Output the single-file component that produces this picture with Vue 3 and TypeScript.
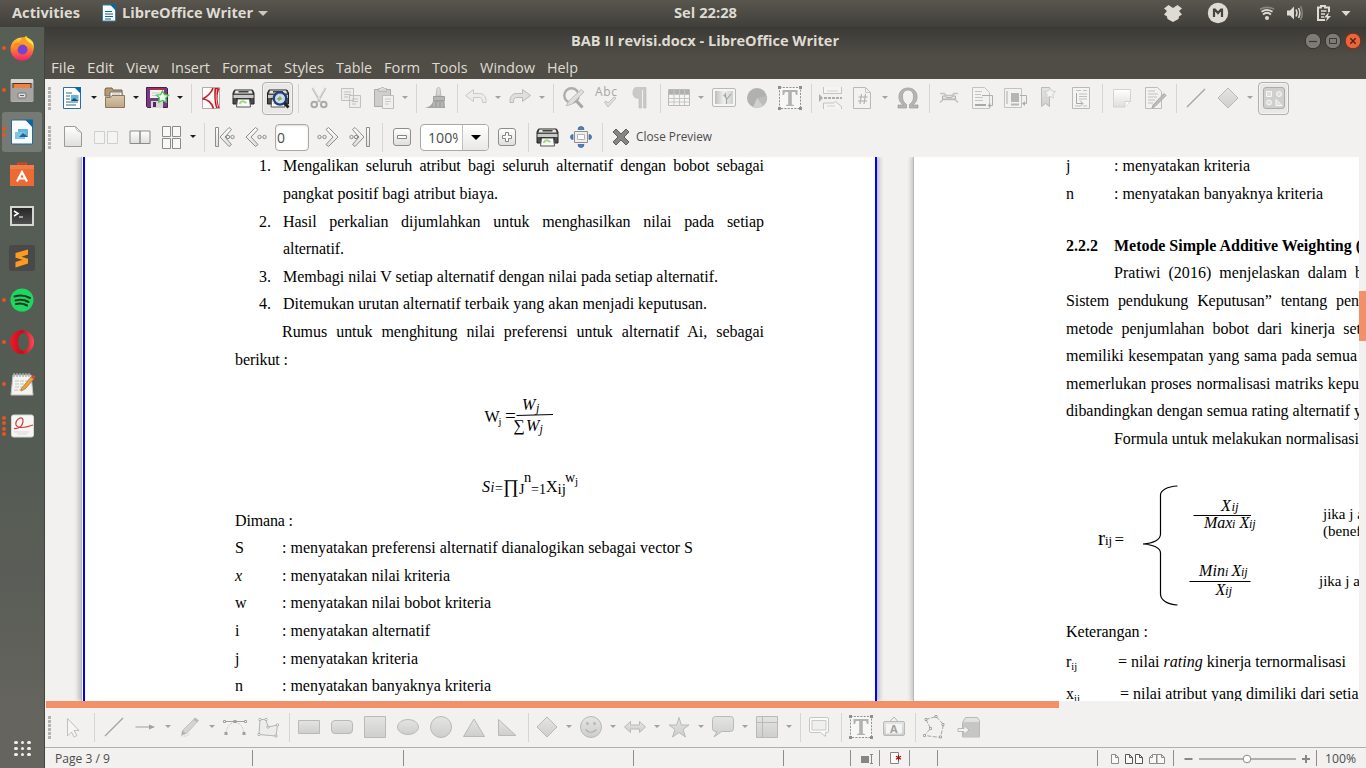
<script setup lang="ts">
import { h, type FunctionalComponent } from 'vue'

interface LabelProps { t: string; w?: number; s?: number; b?: boolean; ws?: number; serif?: boolean; c?: string }

/* A single line of text fitted to a known advance width. */
const Label: FunctionalComponent<LabelProps> = (p) =>
  h('svg', { class: 'label', width: p.w ?? 10, height: 24 }, [
    h('text', {
      x: 0,
      y: 17,
      'font-size': p.s ?? 14,
      'font-weight': p.b ? 700 : 400,
      'font-family': p.serif ? "'Liberation Serif', serif" : "'Open Sans', 'Noto Sans', sans-serif",
      fill: p.c ?? '#000',
      'word-spacing': p.ws ?? 0,
      textLength: p.w,
      lengthAdjust: p.serif ? 'spacing' : 'spacingAndGlyphs',
      innerHTML: p.t,
    }),
  ])
Label.props = { t: String, w: Number, s: Number, b: Boolean, ws: Number, serif: Boolean, c: String }

const G = 'stroke="#b9b9b7" fill="url(#gr)"'
const D = 'stroke="#8d8d8b" fill="url(#lt)"'
const printer = `<path d="M3 4h18l1.500 3v11H1.500V7z" fill="#4b4d4a" stroke="#222"/><path d="M4 4.500h16l1 3H3z" fill="#e6e6e4"/><path d="M7 5.800h10" stroke="#333" stroke-width="1.400"/><path d="M2 9h20v3H2z" fill="#c9cac8"/><path d="M5 12h14v3H5z" fill="#1d1d1d"/><path d="M6 13h12l1 8H5z" fill="#fafafa" stroke="#555"/><path d="M8 18c2-4 4-3 7-1" stroke="#a5d683" stroke-width="2" fill="none"/>`
const textBox = `<path d="M1.500 1.500h21v21h-21z" fill="#f7f7f6" stroke="#8f8f8d" stroke-dasharray="2 1.300"/><path d="M0 0h3v3H0zM21 0h3v3h-3zM0 21h3v3H0zM21 21h3v3h-3z" fill="#8f8f8d"/><path d="M4.500 4h15v5h-1.500l-1-3h-3.200v12.500l2.200.500v1H8v-1l2.200-.500V6H7L6 9H4.500z" fill="#b2b2b0"/>`

const icons: Record<string, string> = {
  newDoc: `<path d="M3.500 1.500h12l5 5v16h-17z" fill="#fff" stroke="#2b6f97"/><path d="M14 1h7v7z" fill="#0b6aa5"/><path d="M6 7h6M6 10h4M6 13h4M6 16h12M6 19h10" stroke="#236b94"/><path d="M11 9h7.500v6H11z" fill="#69b2d8"/><path d="M11 15l3-3 4.500 3z" fill="#154e75"/>`,
  open: `<path d="M2 5.500V3l1-1h6l1 2h9v6H2z" fill="#b39a79" stroke="#7d6548"/><path d="M7 6h12v8H7z" fill="#fafafa" stroke="#777"/><path d="M9 8h8M9 10h8" stroke="#bbb"/><path d="M2.500 21.500V11.500h5l1.500-2h12.500v12z" fill="url(#tan)" stroke="#8d7657"/>`,
  save: `<path d="M1.500 1.500h20l1 1v19h-20l-1-1z" fill="#783b80" stroke="#45204c"/><path d="M5 2h14v10H5z" fill="#f2f2f2"/><path d="M5 2h14v2H5z" fill="#b52d42"/><path d="M7 7h8M7 9.500h6" stroke="#c9c9c9"/><path d="M6 15h12v7H6z" fill="#d6d6d6"/><path d="M8 16h3v5H8z" fill="#522959"/><path d="M17.500 5l2 3.600 4 .600-2.800 2.900.7 4.100-3.900-1.700-3.700 1.700.6-4.100-2.900-2.900 4.100-.6z" fill="#effff0" stroke="#4dc65e" stroke-width="1.300"/>`,
  pdf: `<path d="M3.500 1.500h17v21h-17z" fill="#fbfafa" stroke="#b8a8a6"/><path d="M14 2C13 6 8 11 3.500 13c4.500 0 9.500 3.500 11 9.500" fill="none" stroke="#c4262b" stroke-width="1.700"/><path d="M15.500 2c1.500 0 4 0 5 .500C18 8 18 15 20.500 22H17c-2-6-2-14-1.500-20z" fill="#c4161c"/><path d="M17.700 3c-.9 6-.9 12 1 18.500" stroke="#fff" stroke-width=".7" fill="none"/>`,
  print: `<g transform="translate(.5 0)">${printer}</g>`,
  preview: `<g>${printer}</g><circle cx="14" cy="12.500" r="6.200" fill="#cbe0ef" fill-opacity=".9" stroke="#243b80" stroke-width="2.200"/><path d="M11 13l3-3 2 3-3 2z" fill="#8cae50"/><path d="M18.500 17l4 4.500" stroke="#222" stroke-width="2.800"/>`,
  cut: `<path d="M5.500 2l8 14M18.500 2l-8 14" stroke="#c2c2c0" stroke-width="2.200"/><path d="M6 2l8 13M18 2l-8 13" stroke="#e8e8e6" stroke-width=".8"/><circle cx="7.200" cy="18.500" r="2.800" fill="none" stroke="#aaaaa8" stroke-width="2"/><circle cx="16.800" cy="18.500" r="2.800" fill="none" stroke="#aaaaa8" stroke-width="2"/>`,
  copy: `<g fill="#ededeb" stroke="#c1c1bf"><path d="M2.500 2.500h12v12h-12zM10.500 9.500h11v12h-11z"/><path d="M5 6h7M5 8.500h7M5 11h4M13 13h6M13 15.500h6M13 18h4"/></g>`,
  paste: `<path d="M2.500 3.500h16v17h-16z" fill="#cececc" stroke="#a9a9a7"/><path d="M6.500 5.500v-3h2l1-1h2l1 1h2v3z" ${G}/><path d="M10.500 9.500h11v13h-11z" fill="#f0f0ee" stroke="#bdbdbb"/><path d="M13 13h6M13 15.500h6M13 18h4" stroke="#c8c8c6"/>`,
  brush: `<path d="M12 10l1-7c0-2 3-2 3 0l1 7z" ${G}/><path d="M9.500 10.500h11v4h-11z" fill="#b7b7b5" stroke="#9d9d9b"/><path d="M9 15h11.500l.5 7H1c4-1 7-3 8-7z" fill="#a5a5a3"/><path d="M10 16v5M14 16v5M18 16v5" stroke="#c3c3c1"/>`,
  undo: `<path d="M9.500 3.500v4h6c4 0 6.500 3 6.500 7v2h-3.500c0-4-1-5-3.500-5H9.500v4L1.500 9.500z" fill="#ececea" stroke="#c8c8c6"/>`,
  redo: `<path d="M14.500 3.500v4h-6c-4 0-6.500 3-6.500 7v2h3.500c0-4 1-5 3.500-5h5.500v4l8-6z" fill="#dfdfdd" stroke="#b9b9b7"/>`,
  find: `<circle cx="10.500" cy="9.500" r="7.200" fill="none" stroke="#adadab" stroke-width="2.400"/><path d="M15.500 15l6 6.500" stroke="#a8a8a6" stroke-width="3.200"/><path d="M5 20l3-5L20 3.500 23 6 11 18z" fill="#dededc" stroke="#bebebc"/>`,
  spell: `<text x="0" y="10" font-size="12" font-family="Open Sans, Noto Sans, sans-serif" fill="#a5a5a3" textLength="22">Abc</text><path d="M9.500 16l3.500 5 8-9-2-1-6 6-2-2z" fill="#e0e0de" stroke="#c0c0be"/>`,
  pilcrow: `<path d="M9 1.500h10v20.500h-2.500V3.500h-2V22H12V12C7.500 13 5.500 9.500 6 6c.3-3 1.500-4.500 3-4.500z" fill="#c9c9c7" stroke="#bbbbb9" stroke-width=".6"/>`,
  table: `<path d="M1.500 3.500h21v16h-21z" fill="#f5f5f4" stroke="#b9b9b7"/><path d="M2 4h20v4H2z" fill="#b0b0ae"/><path d="M2 8.500h20M2 12.500h20M2 16h20M7 4v15M12.500 4v15M17.500 4v15" stroke="#c5c5c3"/>`,
  image: `<rect x=".5" y="2.500" width="23" height="18" rx="1.500" fill="#f5f5f4" stroke="#b9b9b7"/><path d="M3 5h18v13H3z" fill="url(#pic)"/><path d="M14.500 18c0-4 1-6-3-9M15 13l4-5M14 11l-1-4" stroke="#a5a5a3" fill="none" stroke-width="1.200"/>`,
  chart: `<circle cx="12" cy="12" r="10" fill="#b1b1af"/><path d="M12 12l10-2a10 10 0 0 1-4 9.500z" fill="#bcbcba"/><path d="M12 12l-4 9.500q5 2 10-2z" fill="#d0d0ce"/>`,
  textBox,
  pageBreak: `<path d="M4.500 1v6.500h18V1M4.500 23v-6h10l2-1.500 6 5V23" fill="#f4f4f3" stroke="#c2c2c0"/><path d="M0 8v8l4-4z" fill="#adadab"/><path d="M5 12h18" stroke="#adadab" stroke-width="1.800" stroke-dasharray="3 1"/><path d="M8 5h11M8 20h8" stroke="#d0d0ce"/>`,
  field: `<path d="M3.500 1.500h12l5 5v16h-17z" fill="#f2f2f0" stroke="#b9b9b7"/><path d="M15.500 1.500v5h5" fill="none" stroke="#c5c5c3"/><path d="M11.500 8l-1.500 10M15.500 8l-1.500 10M8.500 11h9M8 15h9" stroke="#adadab" stroke-width="1.100"/>`,
  omega: `<path d="M2 22v-3h5.500C4 17 2.500 13.500 3 9.500 3.500 5 7 2 12 2s8.500 3 9 7.500c.4 4-1 7.500-4.500 9.500H22v3h-8.500v-3.500c3-2 4.300-5 4-9C17.200 6 15.200 4 12 4S6.800 6 6.500 9.500c-.3 4 1 7 4 9V22z" fill="#b5b5b3" stroke="#999997" stroke-width=".7"/>`,
  link: `<path d="M3 7.500h4l2 2h6l2-2h4M3 16.500l3-3h12l3 3" fill="none" stroke="#c2c2c0" stroke-width="1.600"/><path d="M5.500 10h3l1 1.500h5l1-1.500h3v3h-13z" fill="#e5e5e3" stroke="#b0b0ae"/>`,
  footnote: `<path d="M2.500 1.500h12l5 5v16h-17z" fill="#f2f2f0" stroke="#c2c2c0"/><path d="M5 5.500h7M5 8.500h6M5 11.500h8M5 14.500h8" stroke="#c5c5c3"/><path d="M5 19h11" stroke="#a1a19f" stroke-width="1.800"/><path d="M12 9.500h10.500v10H20" fill="none" stroke="#adadab"/><path d="M20.500 17v5l-3-2.500z" fill="#adadab"/>`,
  endnote: `<path d="M1.500 2.500h17v19h-17z" fill="#f2f2f0" stroke="#c2c2c0"/><path d="M8 7h8v9H8zM8 17.500h8v2H8z" fill="#b5b5b3"/><path d="M17 9.500h6.500v8H21M4 5v13" fill="none" stroke="#adadab"/><path d="M22 15v5l-3-2.500z" fill="#adadab"/>`,
  bookmark: `<path d="M4.500 1.500h8v19l-4-3-4 3z" ${G}/><path d="M13 2l1.700 3 3.800.600-2.700 2.700.6 3.700-3.400-1.600-3.400 1.600.5-3.700L7.500 5.600l3.700-.600z" fill="#f3f3f2" stroke="#cfcfcd"/>`,
  crossref: `<path d="M3.500 1.500h17v21h-17z" fill="#f4f4f2" stroke="#b9b9b7"/><path d="M7 4.500h5M14 4.500h4M10 8h8M10 10.500h8M10 13h8M6 20h5M14 20h4" stroke="#c0c0be"/><path d="M7.500 7v10.500h6M11 14.500l3 3-3 3" fill="none" stroke="#a8a8a6"/>`,
  comment: `<path d="M3.500 3.500h17v12l-5.500 5.500H3.500z" fill="url(#lt)" stroke="#d2d2d0"/><path d="M20 15.500h-5V21" fill="#fff" stroke="#d2d2d0"/>`,
  track: `<path d="M2.500 1.500h12l4 4v17h-16z" fill="#f2f2f0" stroke="#bcbcba"/><path d="M5 5h7M5 8h10M5 11h9M5 14h7M5 17h5" stroke="#c0c0be"/><path d="M10 19L21 7.500l2 2L12 20.500 9 22z" fill="#bcbcba" stroke="#a9a9a7"/>`,
  line: `<path d="M3 21L21 3" stroke="#a3a3a1" stroke-width="1.200"/>`,
  diamond: `<path d="M12 2L22 12 12 22 2 12z" ${G}/>`,
  shapes: `<rect x="1.500" y="1.500" width="21" height="21" rx="2.500" fill="#cfcfcd" stroke="#acacaa"/><g fill="#dededc" stroke="#f7f7f6"><path d="M4.500 5.500h5v5h-5zM14 19.500v-6l6 6z"/><circle cx="17" cy="8" r="2.500"/><circle cx="7" cy="16.500" r="2.500"/></g>`,
  page: `<path d="M3.500 1.500h11l6 6v14h-17z" fill="url(#lt)" stroke="#9a9a98"/><path d="M14 1.500q1 5 6 6" fill="#fff" stroke="#b9b9b7"/>`,
  pages2f: `<path d="M.5 6.500h10v12H.5zM13.500 6.500h10v12h-10z" fill="#f4f4f2" stroke="#cfcfcd"/>`,
  pages2: `<path d="M2 6h10v12.500H2zM12 6h10v12.500H12z" fill="url(#lt)" stroke="#8b8b89"/>`,
  pages4: `<path d="M3.500 1.500h8v10h-8zM13.500 1.500h8v10h-8zM3.500 13.500h8v10h-8zM13.500 13.500h8v10h-8z" fill="#f8f8f7" stroke="#8b8b89"/>`,
  first: `<path d="M3.500 2.500h3v19h-3z" ${D}/><path d="M8 12l9-9.500 2.500 2L13 12l6.500 7.500-2.500 2z" ${D}/><g ${D}><circle cx="16" cy="12" r="1.700"/><circle cx="20.500" cy="12" r="1.700"/></g>`,
  prev: `<path d="M2 12l9.500-9.500 2.500 2L7 12l7 7.500-2.500 2z" ${D}/><g ${D}><circle cx="15.500" cy="12" r="1.700"/><circle cx="20.500" cy="12" r="1.700"/></g>`,
  next: `<path d="M22 12l-9.500-9.500-2.500 2L17 12l-7 7.500 2.500 2z" ${D}/><g ${D}><circle cx="3.500" cy="12" r="1.700"/><circle cx="8.500" cy="12" r="1.700"/></g>`,
  last: `<path d="M18.500 2.500h3v19h-3z" ${D}/><path d="M16 12L7 2.500l-2.500 2L11 12l-6.500 7.500 2.500 2z" ${D}/><g ${D}><circle cx="3.500" cy="12" r="1.700"/><circle cx="8" cy="12" r="1.700"/></g>`,
  minus: `<rect x="3.500" y="3.500" width="17" height="17" rx="2.500" ${D}/><path d="M7.500 10.500h9v3h-9z" fill="#fff" stroke="#858583"/>`,
  plus: `<rect x="3.500" y="3.500" width="17" height="17" rx="2.500" ${D}/><path d="M10.500 7.500h3v3h3v3h-3v3h-3v-3h-3v-3h3z" fill="#fff" stroke="#858583"/>`,
  fit: `<path d="M5.500 6.500h13v11h-13z" fill="#eee" stroke="#8e8e8c"/><path d="M8.500 9.500h7v5h-7z" fill="#fff" stroke="#b5b5b3"/><g fill="#5680bb" stroke="#315b95" stroke-width=".7"><path d="M9 4.500Q9 1.500 12 1.500t3 3zM9 19.500q0 3 3 3t3-3zM4 9.500q-2.500 0-2.500 2.500T4 14.500zM20 9.500q2.500 0 2.500 2.500T20 14.500z"/></g>`,
  close: `<path d="M4 7l3-3 5 5 5-5 3 3-5 5 5 5-3 3-5-5-5 5-3-3 5-5z" fill="#858583" stroke="#5f5f5d"/>`,
  pointer: `<path d="M7.500 3.500l11.500 12h-5l3 5-3 1.500-2.500-5-4 4z" fill="#f5f5f4" stroke="#c0c0be"/>`,
  arrow: `<path d="M2.500 12h14" stroke="#a0a09e"/><path d="M16 9.500l6 2.500-6 2.500z" fill="#a0a09e"/>`,
  pencil: `<path d="M5 15L17 3l3.500 2.500L9 18l-5 2z" fill="#d3d3d1" stroke="#c2c2c0"/><path d="M17 3l3.500 2.500L19 7.500 15.500 5z" fill="#bababa"/><path d="M4 15.500l4 3-4.500 1.500z" fill="#b0b0ae"/><path d="M3 20.500q5 2 9-2" stroke="#d0d0ce" fill="none" stroke-dasharray="2 1"/>`,
  curve: `<path d="M2 6.500h20" stroke="#a0a09e"/><path d="M12 7Q4 9 3 18M12 7q8 2 9 11" fill="none" stroke="#c6c6c4" stroke-dasharray="2 1"/><path d="M10.500 5h3v3h-3zM1.500 17h3v3h-3zM19.500 17h3v3h-3z" fill="#a0a09e"/><path d="M.5 5.500h2v2h-2zM21.500 5.500h2v2h-2z" fill="#fff" stroke="#a0a09e"/>`,
  poly: `<path d="M4 4.500h6L12 12l9.500-2L20 21 3 19.500z" fill="#ececea" stroke="#b5b5b3"/><g fill="#fff" stroke="#a0a09e" stroke-width=".8"><circle cx="4" cy="4.500" r="1.200"/><circle cx="10" cy="4.500" r="1.200"/><circle cx="12" cy="12" r="1.200"/><circle cx="21.500" cy="10" r="1.200"/><circle cx="20" cy="21" r="1.200"/><circle cx="3" cy="19.500" r="1.200"/></g>`,
  rect: `<path d="M1.500 5.500h21v13h-21z" ${G}/>`,
  rrect: `<rect x="1.500" y="5.500" width="21" height="13" rx="3.500" ${G}/>`,
  square: `<path d="M1.500 1.500h21v21h-21z" ${G}/>`,
  ellipse: `<ellipse cx="12" cy="12" rx="10.500" ry="7.500" ${G}/>`,
  circle: `<circle cx="12" cy="12" r="10.500" ${G}/>`,
  tri: `<path d="M12 4l10.500 17.500h-21z" ${G}/>`,
  rtri: `<path d="M3.500 4.500V20.500h17.500z" ${G}/>`,
  smiley: `<circle cx="12" cy="12" r="10.500" ${G}/><path d="M6.500 14.500q5.500 6 11 0" fill="none" stroke="#b0b0ae" stroke-width="1.200"/><circle cx="8.500" cy="8.500" r="1.500" fill="#b8b8b6"/><circle cx="15.500" cy="8.500" r="1.500" fill="#b8b8b6"/>`,
  harrow: `<path d="M1.500 12l6-5.500v3.500h9V6.500l6 5.500-6 5.500V14h-9v3.500z" ${G}/>`,
  star: `<path d="M12 2.500l2.300 7.500H22l-6 4.500 2.500 7.500-6.500-4.500L5.500 22 8 14.500 2 10h7.700z" ${G}/>`,
  callout: `<path d="M4.500 1.500h15a3 3 0 0 1 3 3v9a3 3 0 0 1-3 3h-9L3 22l3-5.500H4.500a3 3 0 0 1-3-3v-9a3 3 0 0 1 3-3z" ${G}/>`,
  flow: `<path d="M1.500 1.500h21v21h-21zM1.500 7.500h21M7.500 1.500v21" ${G}/>`,
  note: `<path d="M4 2.500h16a1.500 1.500 0 0 1 1.500 1.500v12a1.500 1.500 0 0 1-1.500 1.500h-1.500v4l-5-4H4A1.500 1.500 0 0 1 2.500 16V4A1.500 1.500 0 0 1 4 2.500z" fill="#fafaf9" stroke="#c6c6c4"/><path d="M5 5.500h14v9.500H5z" fill="#efefed" stroke="#c9c9c7"/>`,
  frameA: `<path d="M8 6.500L12 2l4 4.500" fill="none" stroke="#b5b5b3"/><rect x="1.500" y="6.500" width="21" height="14" rx="1.500" ${G}/><path d="M4 9h16v9.500H4z" fill="#f4f4f3"/><text x="8" y="17.500" font-size="11" font-weight="700" font-family="Open Sans, Noto Sans, sans-serif" fill="#9f9f9d">A</text>`,
  points: `<path d="M4 4.500l10-3 7.500 8-3 13-16-2 6-7z" fill="none" stroke="#a6a6a4" stroke-dasharray="4 1.500"/><g fill="#fff" stroke="#929290" stroke-width=".8"><path d="M3 3.500h2v2H3zM13 .5h2v2h-2zM20 8.500h2v2h-2zM17.500 21h2v2h-2zM1.500 19.500h2v2h-2zM7.500 12.500h2v2h-2z"/></g>`,
  extrude: `<path d="M5.500 7.500l3-5h12l2 3v16.500h-17z" ${G}/><path d="M6 7h16v14.500H6z" fill="#c6c6c4"/><path d="M1 13.500h6v-3l5 4.500-5 4.500v-3H1z" fill="#f2f2f0" stroke="#b9b9b7"/>`,
}

const widths: Record<string, number> = { drop: 6, dropg: 6, sep: 1, handle: 3, entry: 34, combo: 69, pressed: 31 }

type Entry = [string, number]
/* Turns icon centres into the gaps between consecutive flex items. */
function flow(list: Entry[]) {
  let edge = 45
  return list.map(([name, centre]) => {
    const w = widths[name.split(':')[0]] ?? 24
    const gap = centre - w / 2 - edge
    edge = centre + w / 2
    const [kind, icon] = name.includes(':') ? name.split(':') : [name in widths ? name : 'icon', name]
    return { kind, icon, gap }
  })
}

const bars = [
  { id: 'standard', items: flow([['handle', 49.5], ['newDoc', 72], ['drop', 94], ['open', 115], ['drop', 136], ['save', 157], ['drop', 180], ['sep', 191.500], ['pdf', 211], ['print', 243], ['pressed:preview', 277.500], ['sep', 298.500], ['cut', 319], ['copy', 351], ['paste', 384], ['dropg', 405], ['sep', 416.500], ['brush', 436], ['sep', 457.500], ['undo', 476], ['dropg', 498], ['redo', 520], ['dropg', 542], ['sep', 553.500], ['find', 573], ['spell', 607], ['pilcrow', 639], ['sep', 660.500], ['table', 679], ['dropg', 701], ['image', 724], ['chart', 757], ['textBox', 790], ['sep', 811.500], ['pageBreak', 831], ['field', 862], ['dropg', 885], ['omega', 908], ['sep', 929.500], ['link', 949], ['footnote', 982], ['endnote', 1015], ['bookmark', 1049], ['crossref', 1081], ['sep', 1102.500], ['comment', 1122], ['track', 1155], ['sep', 1176.500], ['line', 1196], ['diamond', 1228], ['dropg', 1250], ['pressed:shapes', 1273.500]]) },
  { id: 'preview', items: flow([['handle', 49.5], ['page', 73], ['pages2f', 106], ['pages2', 139.500], ['pages4', 171], ['drop', 193], ['sep', 204.500], ['first', 224], ['prev', 256], ['entry', 292], ['next', 328], ['last', 360], ['sep', 382.500], ['minus', 402], ['combo', 454.500], ['plus', 507], ['sep', 528.500], ['print', 547], ['fit', 581], ['sep', 602.500], ['close', 621]]) },
]
const drawing = flow([['handle', 49.5], ['pointer', 72], ['sep', 94.500], ['line', 114], ['arrow', 145], ['dropg', 168], ['pencil', 190], ['dropg', 212], ['curve', 235], ['poly', 268], ['sep', 289.500], ['rect', 309], ['rrect', 342], ['square', 375], ['ellipse', 408], ['circle', 441], ['tri', 474], ['rtri', 507], ['sep', 528.500], ['diamond', 547], ['dropg', 569], ['smiley', 591], ['dropg', 613], ['harrow', 635], ['dropg', 657], ['star', 679], ['dropg', 701], ['callout', 723], ['dropg', 745], ['flow', 767], ['dropg', 789], ['sep', 800.500], ['note', 819], ['sep', 841.500], ['textBox', 861], ['frameA', 894], ['sep', 915.500], ['points', 934], ['extrude', 969]])

const menu: [string, number][] = [['File', 24], ['Edit', 27], ['View', 33], ['Insert', 39], ['Format', 50], ['Styles', 40], ['Table', 36], ['Form', 36], ['Tools', 35.500], ['Window', 55], ['Help', 31]]

const dock = [
  { dots: 1, svg: `<circle cx="13" cy="14" r="11.500" fill="url(#ff)"/><path d="M3 5l4 4 3-1 3-5 5-2 1 5q6 4 5 10-2-5-6-6-3-3-9 1z" fill="#ff9b22"/><path d="M16 1q1 5 5 7t3 8q2-9-2-11-1-1-1-1-3-1-5-3z" fill="#ffe34a"/><circle cx="13.500" cy="14.500" r="5" fill="#7542d3"/><path d="M5 9q4-3 8 1-4 0-4 4-4-1-4-5z" fill="#ff8a1c"/>` },
  { dots: 1, svg: `<rect x="1.500" y="2" width="23" height="23" rx="1.500" fill="#b1b0ac"/><path d="M2 2h22v4H2z" fill="#d6d5d2"/><path d="M3.500 6h19v5h-19z" fill="#4b3524"/><path d="M4.500 7h17v4h-17z" fill="#ef8240"/><path d="M2 11h22v13H2z" fill="#a6a5a1"/><rect x="9" y="16" width="8" height="5" rx="1" fill="#ddd" stroke="#74736f"/><path d="M11 18.500h4" stroke="#666"/>` },
  { dots: 2, active: true, svg: `<path d="M2.500 1h15l6 6v18h-21z" fill="#f9fbfc" stroke="#256c96"/><path d="M16 .5h8V9z" fill="#0968a4"/><path d="M9 10h10v8H9z" fill="#62b5dc"/><path d="M6 13h10v7H6z" fill="#83c5e2"/><path d="M10 18l4-4 5 4z" fill="#186796"/>` },
  { dots: 0, svg: `<path d="M9 6V2.500h8V6" fill="none" stroke="#d24a1e" stroke-width="2"/><path d="M1 4h24v21H1z" fill="#ec6b35"/><path d="M1 4h24v4H1z" fill="#f17c49"/><path d="M8 20.500l5-9.500 5 9.500M9.500 17.500h7" fill="none" stroke="#fff" stroke-width="2.200"/>` },
  { dots: 0, svg: `<path d="M1 3h24v20H1z" fill="#d5d5d1"/><path d="M3 5h20v16H3z" fill="url(#term)"/><path d="M5 8l4 2.500L5 13" fill="none" stroke="#fff" stroke-width="1.500"/><path d="M10 14h4" stroke="#ccc" stroke-width="1.400"/>` },
  { dots: 0, svg: `<rect width="26" height="26" rx="2" fill="#4a494a"/><path d="M19 4.500v5l-6.500 2.300 6.500 2v4.700L6.500 22.500V17l7-2.300-7-2V8z" fill="#ff9a1f"/>` },
  { dots: 1, svg: `<circle cx="13" cy="13" r="11.500" fill="#1ed760"/><path d="M5.500 9.500q8-2.500 15.500 1.500M6.500 13.500q7-2 13 1.500M7 17q6-1.500 11 1.500" fill="none" stroke="#173b22" stroke-width="2.100" stroke-linecap="round"/>` },
  { dots: 1, svg: `<path fill-rule="evenodd" d="M13 1a12 12 0 1 0 .1 0zM14 4q6 1 6 9t-6 9q-5-1-5-9t5-9z" fill="url(#op)"/>` },
  { dots: 1, svg: `<path d="M4 4h18l2 20H2z" fill="#f3f3f0" stroke="#c5c5c0"/><path d="M5 2v4M8 2v4M11 2v4M14 2v4M17 2v4M20 2v4" stroke="#aaa" stroke-width="1.300"/><path d="M6 10h13M6 13h12M6 16h8M5 19h7" stroke="#c3c3c0" stroke-dasharray="4 1"/><path d="M12 18L22 6l3 2-9 10-4 2z" fill="#f0a03c" stroke="#a96a23" stroke-width=".7"/><path d="M22 6l2-2 2.500 1.500L25 8z" fill="#d94742"/>` },
  { dots: 4, svg: `<rect x="2.500" y="2" width="22" height="22" rx="2" fill="#f6f6f5" stroke="#d5d5d2"/><path d="M5 15.500q8 .5 9-7 .5-4-3-3.500-5 2.500-4 7 3 5 17 0" fill="none" stroke="#d9373c" stroke-width="1.200"/><path d="M5 19h15M8 21h10" stroke="#d8d8d6"/>` },
]

interface Row { b: number; k?: string; kx?: number; t: string; x: number; w: number; ws?: number; bold?: boolean }
const leftTop: Row[] = [
  { b: 171, k: '1.', kx: 259, t: 'Mengalikan seluruh atribut bagi seluruh alternatif dengan bobot sebagai', x: 283, w: 481, ws: 3.4 },
  { b: 199, t: 'pangkat positif bagi atribut biaya.', x: 283, w: 215 },
  { b: 227, k: '2.', kx: 259, t: 'Hasil perkalian dijumlahkan untuk menghasilkan nilai pada setiap', x: 283, w: 481, ws: 8.8 },
  { b: 254, t: 'alternatif.', x: 283, w: 61 },
  { b: 282, k: '3.', kx: 259, t: 'Membagi nilai V setiap alternatif dengan nilai pada setiap alternatif.', x: 283, w: 435 },
  { b: 309, k: '4.', kx: 259, t: 'Ditemukan urutan alternatif terbaik yang akan menjadi keputusan.', x: 283, w: 424 },
  { b: 337, t: 'Rumus untuk menghitung nilai preferensi untuk alternatif Ai, sebagai', x: 282, w: 482, ws: 5 },
  { b: 365, t: 'berikut :', x: 235, w: 53 },
]
const leftBottom: Row[] = [
  { b: 526, t: 'Dimana :', x: 235, w: 58 },
  { b: 553, k: 'S', kx: 235, t: ': menyatakan preferensi alternatif dianalogikan sebagai vector S', x: 282, w: 411 },
  { b: 581, k: '<tspan font-style="italic">x</tspan>', kx: 235, t: ': menyatakan nilai kriteria', x: 282, w: 168 },
  { b: 608, k: 'w', kx: 235, t: ': menyatakan nilai bobot kriteria', x: 282, w: 209 },
  { b: 636, k: 'i', kx: 235, t: ': menyatakan alternatif', x: 282, w: 148 },
  { b: 664, k: 'j', kx: 235, t: ': menyatakan kriteria', x: 282, w: 136 },
  { b: 691, k: 'n', kx: 235, t: ': menyatakan banyaknya kriteria', x: 282, w: 209 },
]
const rightTop: Row[] = [
  { b: 171, k: 'j', kx: 1066, t: ': menyatakan kriteria', x: 1114, w: 136 },
  { b: 199, k: 'n', kx: 1066, t: ': menyatakan banyaknya kriteria', x: 1114, w: 209 },
  { b: 251, k: '2.2.2', kx: 1066, t: 'Metode Simple Additive Weighting (', x: 1114, w: 247, bold: true },
  { b: 278, t: 'Pratiwi (2016) menjelaskan dalam b', x: 1114, w: 249, ws: 4 },
  { b: 306, t: 'Sistem pendukung Keputusan” tentang pen', x: 1066, w: 293, ws: 5 },
  { b: 334, t: 'metode penjumlahan bobot dari kinerja set', x: 1066, w: 295, ws: 4.300 },
  { b: 361, t: 'memiliki kesempatan yang sama pada semua', x: 1066, w: 291, ws: 0.700 },
  { b: 389, t: 'memerlukan proses normalisasi matriks kepu', x: 1066, w: 293, ws: 0.500 },
  { b: 416, t: 'dibandingkan dengan semua rating alternatif y', x: 1066, w: 296 },
  { b: 444, t: 'Formula untuk melakukan normalisasi', x: 1114, w: 245 },
]
const rightBottom: Row[] = [
  { b: 637, t: 'Keterangan :', x: 1066, w: 82 },
  { b: 667, k: 'r<tspan font-size="10.500" dy="3">ij</tspan>', kx: 1066, t: '= nilai <tspan font-style="italic">rating</tspan> kinerja ternormalisasi', x: 1118, w: 228 },
  { b: 699, k: 'x<tspan font-size="10.500" dy="3">ij</tspan>', kx: 1066, t: '= nilai atribut yang dimiliki dari setia', x: 1119.500, w: 238.500 },
]
/* Row heights follow from the distance between neighbouring baselines. */
function rows(list: Row[], origin: number, end: number) {
  return list.map((r, i) => ({
    ...r,
    height: (list[i + 1]?.b ?? end) - r.b,
    lead: (r.k ? r.kx! : r.x) - origin,
    gap: r.k ? r.x - r.kx! - 20 : 0,
  }))
}
const blocks = [
  { top: rows(leftTop, 235, 390), bottom: rows(leftBottom, 235, 719) },
  { top: rows(rightTop, 1066, 470), bottom: rows(rightBottom, 1066, 727) },
]
const cells = [208, 151, 230, 150, 67, 29, 30, 28, 160, 76, 143, 49]
</script>

<template>
  <div class="desktop">
    <svg class="defs" width="0" height="0">
      <defs>
        <linearGradient id="gr" x2="0" y2="1"><stop stop-color="#e4e4e2" /><stop offset="1" stop-color="#cececc" /></linearGradient>
        <linearGradient id="lt" x2="0" y2="1"><stop stop-color="#fff" /><stop offset="1" stop-color="#dededc" /></linearGradient>
        <linearGradient id="tan" x2="0" y2="1"><stop stop-color="#d9c9ad" /><stop offset="1" stop-color="#bda584" /></linearGradient>
        <linearGradient id="pic" x2="1" y2="0"><stop stop-color="#bebebc" /><stop offset=".5" stop-color="#f0f0ee" /><stop offset="1" stop-color="#cfcfcd" /></linearGradient>
        <linearGradient id="ff" x2="0" y2="1"><stop stop-color="#ffd43a" /><stop offset=".55" stop-color="#ff7139" /><stop offset="1" stop-color="#f0246c" /></linearGradient>
        <linearGradient id="term" x2="0" y2="1"><stop stop-color="#262626" /><stop offset="1" stop-color="#505050" /></linearGradient>
        <linearGradient id="op" x2="1" y2="0"><stop stop-color="#ee1c2c" /><stop offset=".5" stop-color="#c20d1b" /><stop offset="1" stop-color="#ff4b55" /></linearGradient>
      </defs>
    </svg>

    <header class="topbar">
      <Label class="activities" t="Activities" :w="68" :s="13.500" b c="#dfdbd2" />
      <svg class="app-icon" width="16" height="18" viewBox="0 0 16 18"><path d="M1.500 1h9l4 4v12h-13z" fill="#f9fbfc" stroke="#3b7da3" /><path d="M9 .5h6V7z" fill="#0968a4" /><path d="M4 7.500h7M4 10h8M4 12.500h8M4 15h6" stroke="#14618f" /></svg>
      <Label t="LibreOffice Writer" :w="131" :s="13.500" b c="#dfdbd2" />
      <i class="caret" />
      <Label class="clock" t="Sel 22:28" :w="63" :s="13.500" b c="#dfdbd2" />
      <svg class="tray" width="190" height="27" viewBox="1160 0 190 27">
        <g fill="#dfdbd2">
          <path d="M1168.500 5l4.500 3 4.500-3 4.500 3.500-3 2.500 3 3.500-3 2-.500 2.500-5.500 3-5.500-3-.5-2.500-3-2 3-3.500-3-2.500z" />
          <circle cx="1218" cy="13" r="10.200" />
          <path d="M1214 17v-7.500h1l3 3.500 3-3.500h1v7.500" fill="none" stroke="#45443f" stroke-width="2.200" />
          <circle cx="1267" cy="18" r="2" />
          <path d="M1263 14.500q4-3.500 8 0M1261.500 11.800q5.500-4 11 0" fill="none" stroke="#dfdbd2" stroke-width="1.700" />
          <path d="M1260 9.300q7-4 14 0" fill="none" stroke="#88857d" stroke-width="1.700" />
          <path d="M1287 10.500h3l4-4v13l-4-4h-3z" />
          <path d="M1296 9.500q2 3.500 0 7M1298.500 8q2.800 5 0 10" fill="none" stroke="#dfdbd2" stroke-width="1.500" />
          <path d="M1300.500 6q3.500 7 0 14" fill="none" stroke="#88857d" stroke-width="1.500" />
          <path d="M1325 20h-7V7.500h3V6h4v1.500h4V12" fill="none" stroke="#dfdbd2" stroke-width="2" />
          <path d="M1321 11h5.500M1321 14h4M1321 17h3" stroke="#dfdbd2" stroke-width="1.500" />
          <path d="M1329 12l-5 5.500h3l-1 4 5-5.500h-3z" />
          <path d="M1341.500 11h9l-4.500 5z" />
        </g>
      </svg>
    </header>

    <div class="body">
      <aside class="dock">
        <div v-for="(d, i) in dock" :key="i" class="launcher" :class="{ active: d.active }">
          <span class="dots"><i v-for="n in d.dots" :key="n" /></span>
          <svg width="26" height="26" viewBox="0 0 26 26" v-html="d.svg" />
        </div>
        <div class="apps"><i v-for="n in 9" :key="n" /></div>
      </aside>

      <main class="window">
        <div class="titlebar">
          <Label t="BAB II revisi.docx - LibreOffice Writer" :w="268" :s="13.500" b c="#dfdbd2" />
          <svg class="controls" width="60" height="20" viewBox="0 0 60 20">
            <circle cx="9" cy="10" r="7.800" fill="#7d7b74" stroke="#33322e" /><path d="M5 10.500h8" stroke="#3a3934" stroke-width="1.200" />
            <circle cx="29" cy="10" r="7.800" fill="#7d7b74" stroke="#33322e" /><path d="M25.500 7.500h7v5h-7z" fill="none" stroke="#3a3934" />
            <circle cx="49" cy="10" r="7.800" fill="#ee6439" stroke="#713019" /><path d="M46.300 7.300l5.400 5.400M51.700 7.300l-5.400 5.400" stroke="#40281f" stroke-width="1.400" />
          </svg>
        </div>
        <nav class="menu"><Label v-for="m in menu" :key="m[0]" :t="m[0]" :w="m[1]" :s="14" c="#dfdbd2" /></nav>

        <div v-for="bar in bars" :key="bar.id" class="toolbar" :class="bar.id">
          <template v-for="(it, i) in bar.items" :key="i">
            <span v-if="it.kind === 'entry'" class="entry" :style="{ marginLeft: it.gap + 'px' }"><Label t="0" :w="8" :s="14" c="#4c4c4c" /></span>
            <span v-else-if="it.kind === 'combo'" class="combo" :style="{ marginLeft: it.gap + 'px' }">
              <span class="value"><Label t="100%" :w="36" :s="14" c="#4c4c4c" /></span><span class="button"><i /></span>
            </span>
            <span v-else :class="it.kind" :style="{ marginLeft: it.gap + 'px' }"><svg v-if="icons[it.icon]" width="24" height="24" viewBox="0 0 24 24" v-html="icons[it.icon]" /></span>
          </template>
          <Label v-if="bar.id === 'preview'" class="close-label" t="Close Preview" :w="76" :s="12.500" c="#4c4c4c" />
        </div>

        <section class="document">
          <div class="paper left-paper">
            <div class="flowed">
              <div v-for="(r, i) in blocks[0].top" :key="i" class="row" :style="{ height: r.height + 'px', paddingLeft: r.lead + 'px' }">
                <span v-if="r.k" class="key"><Label :t="r.k" :s="16" serif /></span>
                <Label :t="r.t" :w="r.w" :s="16" :ws="r.ws" :b="r.bold" serif :style="{ marginLeft: r.gap + 'px' }" />
              </div>
              <svg class="formula" width="530" height="136" viewBox="235 376 530 136">
                <text x="484.500" y="421.500">W</text><text x="498.500" y="425" font-size="10.500">j</text><text x="505" y="422" font-size="19">=</text>
                <g font-style="italic"><text x="522" y="409.500">W</text><text x="536" y="412" font-size="12">j</text><text x="526" y="430.500">W</text><text x="539.500" y="433" font-size="12">j</text></g>
                <path d="M516.500 415.500L553 414.500" stroke="#000" />
                <text x="513.500" y="431" font-size="16">∑</text>
                <g font-style="italic"><text x="482" y="492">S</text><text x="490.500" y="492" font-size="14">i</text></g>
                <text x="495" y="493" font-size="14">=</text><text x="503" y="493" font-size="19">∏</text>
                <text x="519" y="494" font-size="14">J</text><text x="524" y="481.500" font-size="14.500">n</text>
                <text x="531" y="494" font-size="14" textLength="15">=1</text><text x="546" y="492">X</text><text x="557.500" y="494" font-size="15">ij</text>
                <text x="565" y="481.500" font-size="14">w</text><text x="575" y="484.500" font-size="11">j</text>
              </svg>
              <div v-for="(r, i) in blocks[0].bottom" :key="'b' + i" class="row" :style="{ height: r.height + 'px', paddingLeft: r.lead + 'px' }">
                <span v-if="r.k" class="key"><Label :t="r.k" :s="16" serif /></span>
                <Label :t="r.t" :w="r.w" :s="16" serif :style="{ marginLeft: r.gap + 'px' }" />
              </div>
            </div>
          </div>
          <div class="paper right-paper">
            <div class="flowed">
              <div v-for="(r, i) in blocks[1].top" :key="i" class="row" :style="{ height: r.height + 'px', paddingLeft: r.lead + 'px' }">
                <span v-if="r.k" class="key"><Label :t="r.k" :s="16" :b="r.bold" serif /></span>
                <Label :t="r.t" :w="r.w" :s="16" :ws="r.ws" :b="r.bold" serif :style="{ marginLeft: r.gap + 'px' }" />
              </div>
              <svg class="formula" width="300" height="167" viewBox="1066 456 300 167">
                <text x="1098" y="545" font-size="21">r</text><text x="1105" y="545" font-size="13">ij</text><text x="1114.500" y="545" font-size="17">=</text>
                <path d="M1177.500 486C1167 486.500 1160.500 490.500 1160.500 495V534C1160.500 540 1153 543.500 1143 544C1153 544.500 1160.500 548 1160.500 553V594C1160.500 600 1167 604.500 1177.500 605" fill="none" stroke="#000" stroke-width="1.200" />
                <path d="M1193.500 515.500H1251M1189.500 581.500H1250.500" stroke="#000" />
                <g font-style="italic">
                  <text x="1221" y="510.500">X</text><text x="1231.500" y="510.500" font-size="13">ij</text>
                  <text x="1204" y="528">Max</text><text x="1232" y="528" font-size="12">i</text><text x="1239.500" y="528">X</text><text x="1249" y="528" font-size="12">ij</text>
                  <text x="1199" y="575.500" textLength="26">Min</text><text x="1225" y="575.500" font-size="12">i</text><text x="1231.500" y="575.500">X</text><text x="1241" y="575.500" font-size="12">ij</text>
                  <text x="1215.500" y="594.500">X</text><text x="1225" y="594.500" font-size="13">ij</text>
                </g>
                <g font-size="15"><text x="1323" y="519">jika j a</text><text x="1323" y="536">(benef</text><text x="1319" y="586">jika j a</text></g>
              </svg>
              <div v-for="(r, i) in blocks[1].bottom" :key="'b' + i" class="row" :style="{ height: r.height + 'px', paddingLeft: r.lead + 'px' }">
                <span v-if="r.k" class="key"><Label :t="r.k" :s="16" serif /></span>
                <Label :t="r.t" :w="r.w" :s="16" serif :style="{ marginLeft: r.gap + 'px' }" />
              </div>
            </div>
          </div>
          <div class="vscroll"><i /></div>
        </section>
        <div class="hscroll"><i /></div>

        <div class="toolbar drawing">
          <span v-for="(it, i) in drawing" :key="i" :class="it.kind" :style="{ marginLeft: it.gap + 'px' }"><svg v-if="icons[it.icon]" width="24" height="24" viewBox="0 0 24 24" v-html="icons[it.icon]" /></span>
        </div>

        <footer class="status">
          <div v-for="(c, i) in cells" :key="i" class="cell" :style="{ width: c + 'px' }">
            <Label v-if="i === 0" class="page-no" t="Page 3 / 9" :w="55" :s="12.500" c="#4c4c4c" />
            <svg v-else-if="i === 5" width="29" height="16"><path d="M10 6h8v7h-8z" fill="#868684" /><path d="M19 4.500h3M20.500 4.500v9M19 13.500h3" stroke="#868684" /></svg>
            <svg v-else-if="i === 6" width="30" height="16"><path d="M10.500 2.500h8v11h-8z" fill="#fafafa" stroke="#868684" /><path d="M18.500 5v5.500M16 6.300l5 3M21 6.300l-5 3" stroke="#a60d12" stroke-width="1.100" /></svg>
            <svg v-else-if="i === 9" width="76" height="16" fill="#f8f8f7"><path d="M13.500 4.500h4l3 3v6h-7zM17.500 4.500v3h3" stroke="#8b8b89" /><path d="M27.500 4.500h4l3 3v6h-7zM31.500 4.500v3h3M37.500 4.500h4l3 3v6h-7zM41.500 4.500v3h3" stroke="#555553" /><path d="M54.500 4.500h4v9h-7v-6zM54.500 4.500v3h-3M59 4.500h4.500l3 3v6H59zM63.500 4.500v3h3" stroke="#8b8b89" /></svg>
            <svg v-else-if="i === 10" width="143" height="18"><path d="M10.500 9h8M128 9h8M132 5v8" stroke="#878785" stroke-width="2" /><path d="M25 9h97" stroke="#b1b0ae" stroke-width="2" /><circle cx="73" cy="9" r="3.800" fill="#fff" stroke="#8b8b89" /></svg>
            <Label v-else-if="i === 11" class="zoom" t="100%" :w="31" :s="12.500" c="#4c4c4c" />
          </div>
        </footer>
      </main>
    </div>
  </div>
</template>

<style>
body { margin: 0; overflow: hidden; }
</style>

<style scoped>
.desktop { width: 1366px; height: 768px; overflow: hidden; background: #f2f1f0; display: flex; flex-direction: column; font-family: 'Open Sans', 'Noto Sans', sans-serif; }
.defs { position: absolute; }
svg { display: block; flex: none; overflow: visible; }
.label { display: block; flex: none; overflow: visible; }
.topbar { height: 27px; flex: none; display: flex; align-items: flex-start; background: linear-gradient(#59564e, #403f3a); }
.topbar .label { margin-top: 1px; }
.activities { margin-left: 12px; }
.app-icon { margin: 4px 5px 0 21px; }
.caret { margin: 11px 0 0 5px; border: 5px solid transparent; border-top-color: #cbc8c0; border-bottom: 0; }
.clock { margin-left: 406px; }
.tray { margin-left: 423px; }
.body { flex: 1; min-height: 0; display: flex; }
.dock { width: 45px; box-sizing: border-box; flex: none; border-right: 1px solid #42443f; background: linear-gradient(#565e55, #535b53 55%, #5c5e58 78%, #65645e 92%); display: flex; flex-direction: column; }
.launcher { height: 40px; width: 40px; margin: 1px 2px; display: flex; align-items: center; border-radius: 3px; flex: none; }
.launcher.active { background: #757b74; }
.dots { width: 7px; display: flex; flex-direction: column; align-items: flex-start; gap: 1.500px; }
.dots i { width: 4px; height: 4px; border-radius: 50%; background: #e95420; }
.apps { margin: auto 0 12px 14px; display: grid; grid-template-columns: repeat(3, 4px); gap: 2.500px; }
.apps i { width: 3.500px; height: 3.500px; border-radius: 50%; background: #f0f0ee; }
.window { width: 1321px; display: flex; flex-direction: column; }
.titlebar { height: 30px; flex: none; display: flex; align-items: flex-start; background: linear-gradient(#3b3a36, #504d46); padding-left: 526px; }
.titlebar .label { margin-top: 2px; }
.controls { margin: 4px 0 0 465px; }
.menu { height: 22px; flex: none; background: #504d46; display: flex; gap: 12px; padding-left: 6px; }
.menu .label { margin-top: -1px; }
.toolbar { display: flex; align-items: center; flex: none; }
.standard { height: 38px; }
.preview { height: 40px; box-sizing: border-box; }
.drawing { height: 38px; }
.icon { width: 24px; height: 24px; flex: none; }
.sep { width: 1px; height: 29px; background: #d6d5d3; flex: none; }
.handle { width: 3px; height: 23px; flex: none; background: repeating-linear-gradient(#b4b3b1 0 3px, transparent 3px 4px); }
.drop, .dropg { width: 6px; height: 4px; flex: none; }
.drop::before, .dropg::before { content: ''; display: block; border: 3px solid transparent; border-top-color: #1c1c1c; border-bottom: 0; }
.dropg::before { border-top-color: #a2a2a0; }
.pressed { width: 31px; height: 33px; box-sizing: border-box; flex: none; border: 1px solid #b1b0ad; border-radius: 4px; background: #e9e8e6; box-shadow: inset 0 0 0 1px #f3f3f2; display: flex; align-items: center; justify-content: center; }
.entry { width: 34px; height: 27px; box-sizing: border-box; border: 1px solid #a9a8a5; border-radius: 4px; background: #fff; box-shadow: inset 0 1px 2px #ddd; flex: none; }
.combo { width: 69px; height: 27px; box-sizing: border-box; border: 1px solid #a9a8a5; border-radius: 4px; background: #fff; flex: none; display: flex; overflow: hidden; }
.entry .label { margin: 1px 0 0 1px; }
.value { width: 30px; padding: 1px 0 0 7px; overflow: hidden; }
.value + .button { margin-left: 4px; }
.button { flex: 1; border-left: 1px solid #c1c0bd; background: linear-gradient(#fff, #e9e8e6); display: flex; align-items: center; justify-content: center; }
.button i { border: 5px solid transparent; border-top-color: #000; border-bottom: 0; }
.close-label { margin-left: 3px; margin-bottom: 2px; }
.document { height: 544px; flex: none; display: flex; overflow: hidden; }
.paper { background: #fff; flex: none; }
.left-paper { width: 790px; margin-left: 38px; border: solid #00f; border-width: 0 2px; box-shadow: -1px 0 #fff, -2px 0 #b5b5b3, -5px 0 4px #c4c4c2, 3px 0 4px #c4c4c2; }
.left-paper .flowed { margin-left: 150px; }
.right-paper { width: 445px; margin-left: 37px; box-shadow: -1px 0 #b8b8b6, -3px 0 4px #c4c4c2; }
.right-paper .flowed { margin-left: 152px; width: 293px; height: 544px; overflow: hidden; }
.row { display: flex; align-items: flex-start; box-sizing: border-box; }
.row .label { margin-top: -3px; }
.key { width: 20px; flex: none; }
.formula { font: 16px 'Liberation Serif', serif; }
.vscroll { width: 7px; padding-top: 134px; background: #f2f1f0; flex: none; z-index: 1; }
.vscroll i { display: block; height: 50px; background: #f29069; }
.hscroll { height: 7px; flex: none; padding-left: 1px; background: #f2f1f0; position: relative; }
.hscroll i { display: block; width: 1013px; height: 7px; background: #f29069; }
.status { height: 21px; box-sizing: border-box; border-top: 1px solid #b0afac; flex: none; display: flex; padding-top: 2px; margin-top: 1px; }
.cell { height: 16px; box-sizing: border-box; border-right: 1px solid #8e8d8a; flex: none; }
.cell:last-child { border: 0; }
.page-no { margin: -4px 0 0 10px; }
.zoom { margin: -4px 0 0 8px; }
</style>
